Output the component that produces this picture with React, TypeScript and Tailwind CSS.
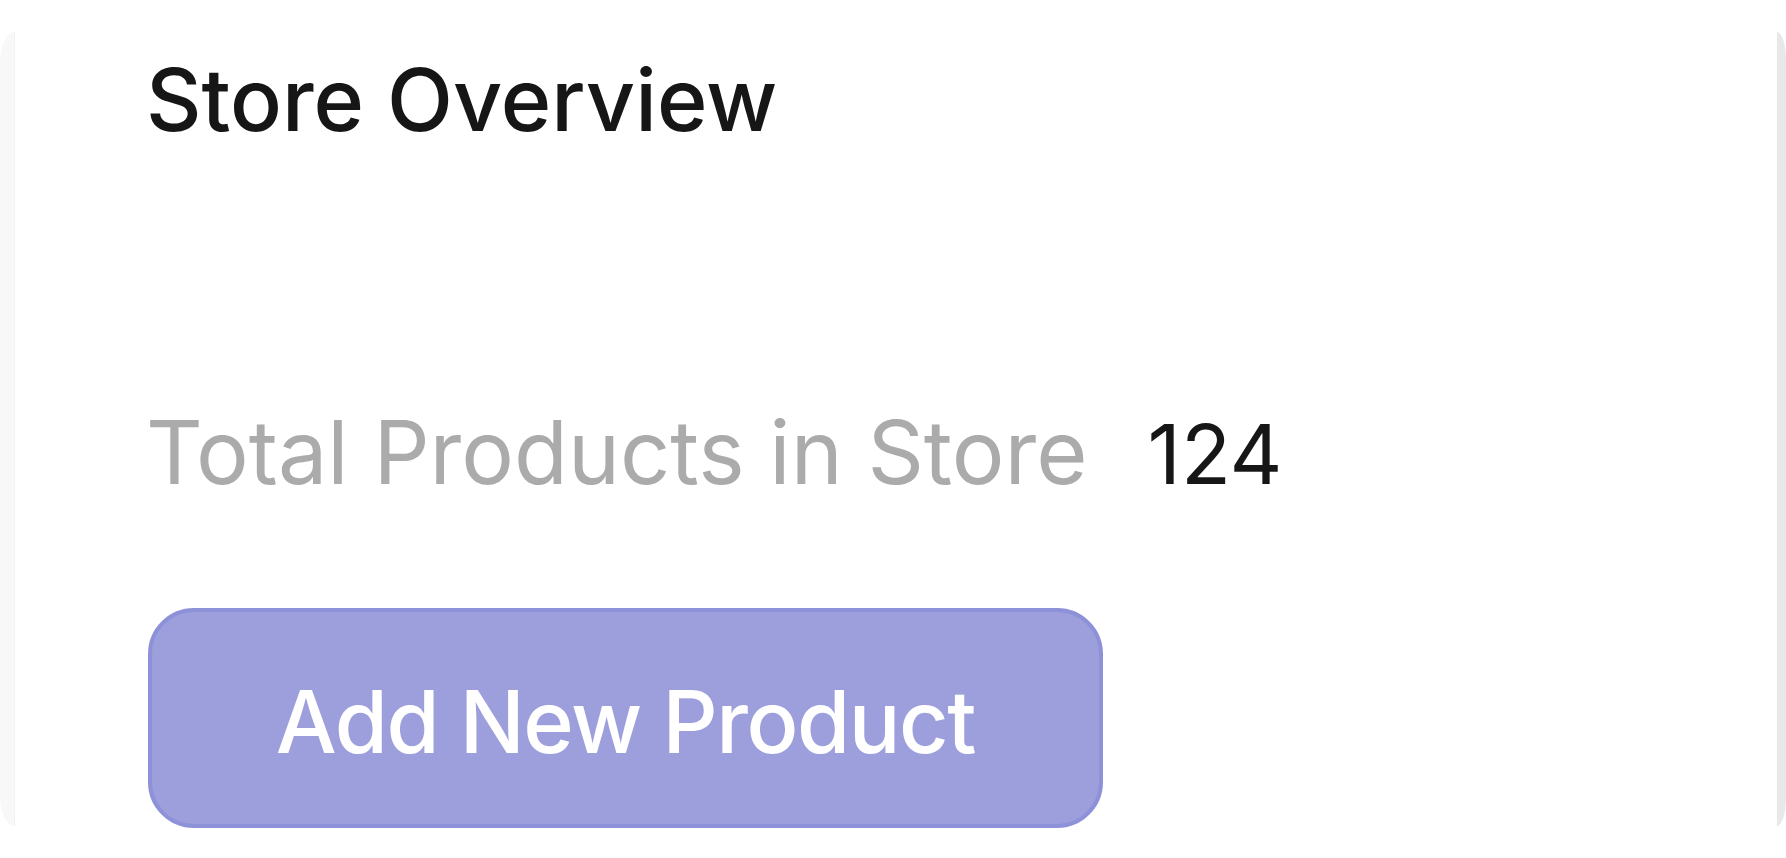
export default function App() {
  return (
    <div className="w-[1786px] h-[858px] bg-white flex font-['Inter',sans-serif] overflow-hidden">
      <div className="w-[15px] my-[32px] bg-[#f8f8f8] rounded-tl-[15px_30px] rounded-bl-[15px_30px] border-r border-[#f2f2f2]" />
      <div className="flex-1 flex flex-col pl-[131px]">
        <h1 className="mt-[57px] text-[86px] leading-none font-medium text-[#161616]">Store Overview</h1>
        <div className="mt-[265px] flex items-baseline gap-[60px] text-[88px] leading-none">
          <span className="text-[#ababab]">Total Products in Store</span>
          <span className="text-[#161616] text-[82px]">124</span>
        </div>
        <button className="mt-[112px] ml-[2px] w-[955px] h-[220px] rounded-[46px] bg-[#9c9fdc] border-[4px] border-[#8d91d8] text-white text-[86px] tracking-[-1.4px] leading-none font-medium flex items-center justify-center pt-[8px]">
          Add New Product
        </button>
      </div>
      <div className="w-[9px] my-[32px] bg-[#e8e8e8] rounded-tr-[9px_28px] rounded-br-[9px_28px]" />
    </div>
  );
}
